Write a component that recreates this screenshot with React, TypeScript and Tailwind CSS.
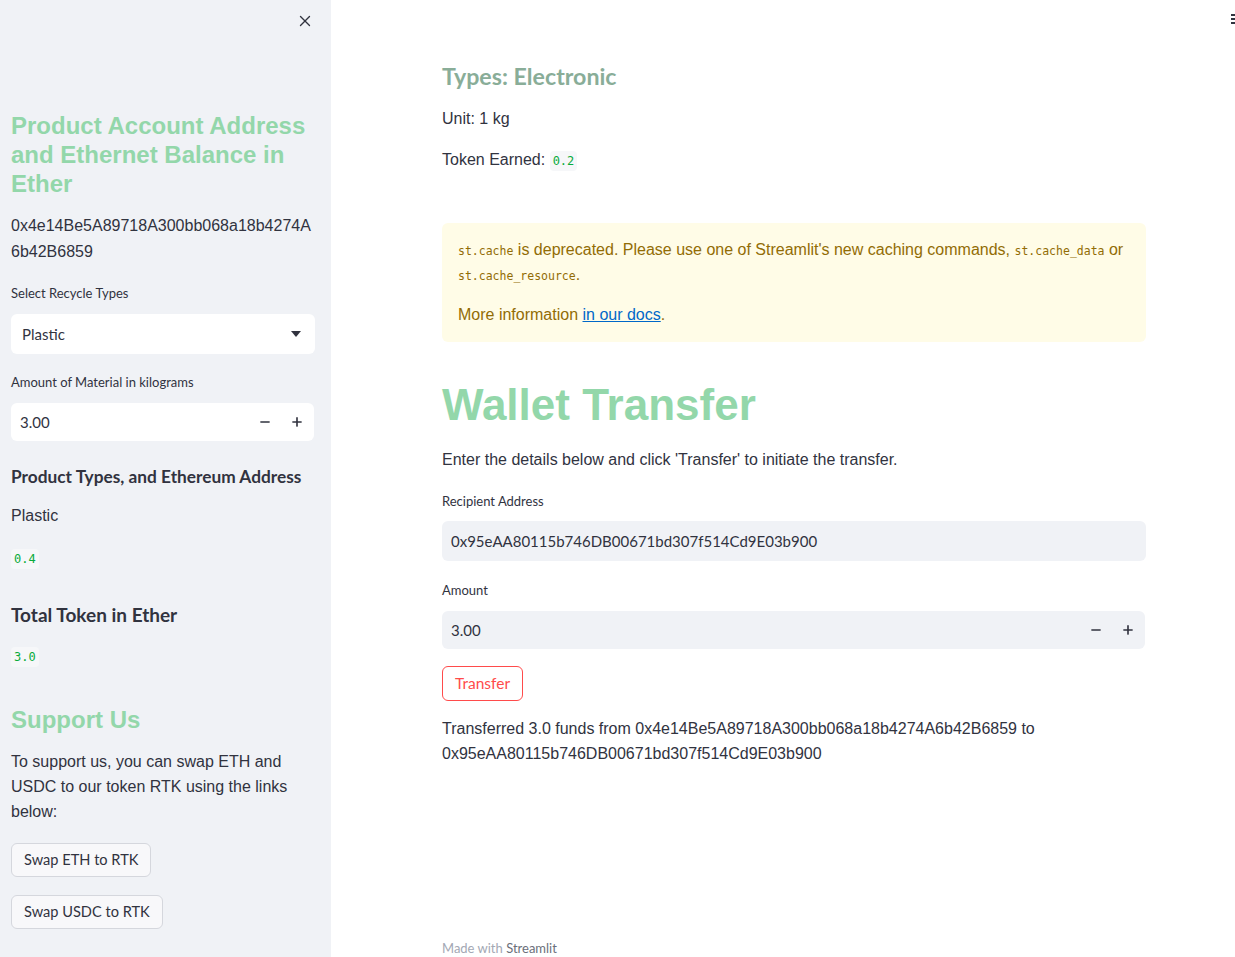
import { X, Minus, Plus } from 'lucide-react';

const sans = "font-['Liberation_Sans',Arial,sans-serif]";
const ui = "font-['Lato','Noto_Sans',sans-serif]";
const mono = "font-['DejaVu_Sans_Mono','Liberation_Mono',monospace]";

function Code({ children }: { children: string }) {
  return (
    <span className={`${mono} inline-block rounded bg-[#f6f7f9] px-[3px] text-[12px] leading-[20px] text-[#09ab3b]`}>
      {children}
    </span>
  );
}

function NumberInput({ value, bg }: { value: string; bg: string }) {
  return (
    <div className={`flex h-[38px] items-center rounded-md ${bg} pl-[9px] pr-[10px]`}>
      <span className={`${ui} flex-1 text-[15px] text-[#31333f]`}>{value}</span>
      <Minus className="mr-[18px] h-[14px] w-[14px] text-[#31333f]" strokeWidth={2.8} />
      <Plus className="h-[14px] w-[14px] text-[#31333f]" strokeWidth={2.8} />
    </div>
  );
}

function Sidebar() {
  return (
    <aside className="flex w-[331px] shrink-0 flex-col bg-[#f0f2f6] pl-[11px] pr-[16px] text-[#31333f]">
      <div className="flex h-[40px] items-center justify-end pr-[1px] pt-[1px]">
        <X className="h-[18px] w-[18px] text-[#31333f]" strokeWidth={1.8} />
      </div>
      <h2 className={`${sans} mt-[71px] text-[24px] font-bold leading-[29px] text-[#93d7aa]`}>
        Product Account Address and Ethernet Balance in Ether
      </h2>
      <p className={`${sans} mt-[15px] break-all text-[16px] leading-[26px]`}>
        0x4e14Be5A89718A300bb068a18b4274A6b42B6859
      </p>
      <label className={`${ui} mt-[18px] block text-[13px] leading-[20px]`}>Select Recycle Types</label>
      <div className="mt-[11px] flex h-[40px] items-center rounded-md bg-white pl-[11px] pr-[14px]">
        <span className={`${ui} flex-1 text-[15px]`}>Plastic</span>
        <svg width="10" height="6" viewBox="0 0 10 6">
          <path d="M0 0h10L5 6z" fill="#31333f" />
        </svg>
      </div>
      <label className={`${ui} mt-[18px] block text-[13px] leading-[20px]`}>Amount of Material in kilograms</label>
      <div className="mt-[11px] mr-[1px]">
        <NumberInput value="3.00" bg="bg-white" />
      </div>
      <h3 className={`${ui} mt-[23px] text-[17.3px] font-bold leading-[26px]`}>Product Types, and Ethereum Address</h3>
      <p className={`${sans} mt-[14px] text-[16px] leading-[24px]`}>Plastic</p>
      <div className="mt-[17px] leading-[24px]">
        <Code>0.4</Code>
      </div>
      <h3 className={`${ui} mt-[32px] text-[19px] font-bold leading-[28px]`}>Total Token in Ether</h3>
      <div className="mt-[14px] leading-[24px]">
        <Code>3.0</Code>
      </div>
      <h2 className={`${sans} mt-[38px] text-[24px] font-bold leading-[29px] text-[#93d7aa]`}>Support Us</h2>
      <p className={`${sans} mt-[15px] text-[16px] leading-[25px]`}>
        To support us, you can swap ETH and USDC to our token RTK using the links below:
      </p>
      <div className="mt-[19px] flex flex-col items-start gap-[18px]">
        <button className={`${ui} h-[34px] rounded-md border border-[#d5d7dd] bg-[#f8f8fa] px-[12px] text-[14.6px] text-[#31333f]`}>
          Swap ETH to RTK
        </button>
        <button className={`${ui} h-[34px] rounded-md border border-[#d5d7dd] bg-[#f8f8fa] px-[12px] text-[14.6px] text-[#31333f]`}>
          Swap USDC to RTK
        </button>
      </div>
    </aside>
  );
}

export default function App() {
  return (
    <div className="relative flex h-[957px] w-[1235px] overflow-hidden bg-white">
      <Sidebar />
      <main className="flex min-h-full flex-1 flex-col pl-[111px] text-[#31333f]">
        <div className="w-[704px]">
          <h3 className={`${ui} mt-[60px] text-[23.2px] font-bold leading-[32px] text-[#89ad98]`}>Types: Electronic</h3>
          <p className={`${sans} mt-[15px] text-[16px] leading-[24px]`}>Unit: 1 kg</p>
          <p className={`${sans} mt-[17px] text-[16px] leading-[24px]`}>
            Token Earned: <Code>0.2</Code>
          </p>
          <div className={`${sans} mt-[51px] rounded-md bg-[#fffce7] px-[16px] pt-[14px] pb-[15px] text-[16px] leading-[25px] text-[#926c05]`}>
            <p>
              <span className={`${mono} text-[11.5px] leading-[1]`}>st.cache</span> is deprecated. Please use one of Streamlit's new caching commands,{' '}
              <span className={`${mono} text-[11.5px] leading-[1]`}>st.cache_data</span> or{' '}
              <span className={`${mono} text-[11.5px] leading-[1]`}>st.cache_resource</span>.
            </p>
            <p className="mt-[15px]">
              More information <a className="text-[#0068c9] underline">in our docs</a>.
            </p>
          </div>
          <h1 className={`${sans} mt-[36px] text-[44px] font-bold leading-[53px] text-[#93d7aa]`}>Wallet Transfer</h1>
          <p className={`${sans} mt-[17px] text-[16px] leading-[24px]`}>
            Enter the details below and click 'Transfer' to initiate the transfer.
          </p>
          <label className={`${ui} mt-[19px] block text-[13px] leading-[20px]`}>Recipient Address</label>
          <div className="mt-[10px] flex h-[40px] items-center rounded-md bg-[#f0f2f6] px-[9px]">
            <span className={`${ui} text-[15px]`}>0x95eAA80115b746DB00671bd307f514Cd9E03b900</span>
          </div>
          <label className={`${ui} mt-[19px] block text-[13px] leading-[20px]`}>Amount</label>
          <div className="mt-[11px] mr-[1px]">
            <NumberInput value="3.00" bg="bg-[#f0f2f6]" />
          </div>
          <button className={`${ui} mt-[17px] h-[35px] rounded-md border border-[#ff4b4b] bg-white px-[12px] text-[15.5px] text-[#ff4b4b]`}>
            Transfer
          </button>
          <p className={`${sans} mt-[15px] text-[16px] leading-[25px]`}>
            Transferred 3.0 funds from 0x4e14Be5A89718A300bb068a18b4274A6b42B6859 to 0x95eAA80115b746DB00671bd307f514Cd9E03b900
          </p>
        </div>
        <footer className={`${ui} mt-auto text-[13px] leading-[18px] text-[#a3a8b4]`}>
          Made with <span className="text-[#6b6f7a]">Streamlit</span>
        </footer>
      </main>
      <div className="absolute right-0 top-[14px] flex w-[4px] flex-col gap-[2px]">
        <span className="h-[2px] bg-[#31333f]" />
        <span className="h-[2px] bg-[#31333f]" />
        <span className="h-[2px] bg-[#31333f]" />
      </div>
    </div>
  );
}
